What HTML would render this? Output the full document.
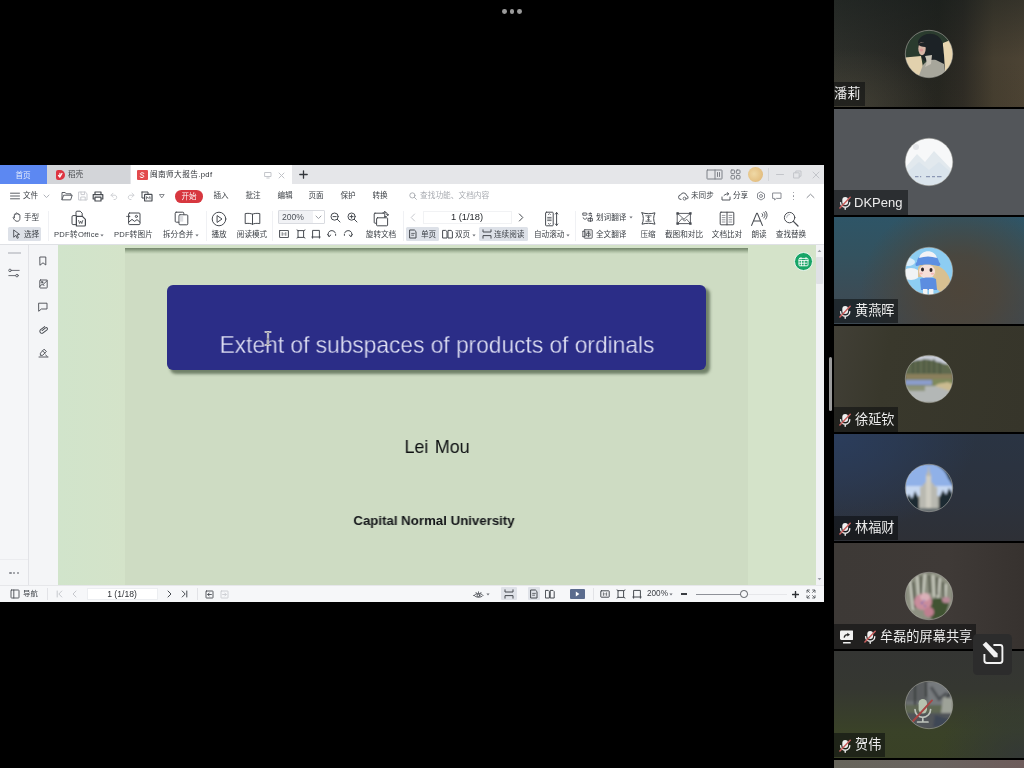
<!DOCTYPE html>
<html lang="zh"><head><meta charset="utf-8"><title>Meeting - shared screen</title>
<style>
html,body{margin:0;padding:0}
body{width:1024px;height:768px;background:#000;position:relative;overflow:hidden;font-family:"Liberation Sans","Noto Sans CJK SC",sans-serif}
.b{position:absolute;display:block}
.t{position:absolute;display:flex;align-items:center;white-space:nowrap;will-change:transform;font-family:"Liberation Sans","Noto Sans CJK SC",sans-serif}
.t svg{display:block;flex:none}
.ic{fill:none;stroke:#3b3f45;stroke-width:1;stroke-linecap:round;stroke-linejoin:round}
</style></head><body>
<svg width="0" height="0" style="position:absolute"><defs><filter id="soft" x="-10%" y="-10%" width="120%" height="120%"><feGaussianBlur stdDeviation="0.55"/></filter><filter id="soft1" x="-10%" y="-10%" width="120%" height="120%"><feGaussianBlur stdDeviation="0.8"/></filter><filter id="soft2" x="-10%" y="-10%" width="120%" height="120%"><feGaussianBlur stdDeviation="1.15"/></filter></defs></svg>
<div class="b" style="left:502.0px;top:9.3px;width:4.8px;height:4.8px;background:#9b9b9b;border-radius:50%"></div>
<div class="b" style="left:509.6px;top:9.3px;width:4.8px;height:4.8px;background:#9b9b9b;border-radius:50%"></div>
<div class="b" style="left:517.2px;top:9.3px;width:4.8px;height:4.8px;background:#9b9b9b;border-radius:50%"></div>
<div class="b" style="left:0px;top:164.7px;width:824.3px;height:437.8px;background:#ffffff;"></div>
<div class="b" style="left:0px;top:164.7px;width:824.3px;height:19px;background:#e5e6e9;"></div>
<div class="b" style="left:0px;top:164.7px;width:46.8px;height:19px;background:#5c88f2;"></div>
<div class="t" aria-label="首页" style="top:170.64px;height:9.12px;line-height:9.12px;font-size:7.6px;color:#e4ecfd;left:23.4px;transform:translateX(-50%);"><span>首页</span></div>
<div class="b" style="left:46.8px;top:164.7px;width:83.7px;height:19px;background:#d3d5d9;"></div>
<div class="b" style="left:55.8px;top:170.2px;width:9.3px;height:9.9px;background:#de3542;border-radius:2px 5px 5px 2px"></div>
<svg class="b ic" style="left:56.2px;top:171.0px;" width="8" height="8" viewBox="0 0 8 8"><path d="M2.4 4.4 3.8 6.2 6 2.4M3.9 6V2.2" style="stroke:#fff;stroke-width:1.1"/></svg>
<div class="t" aria-label="稻壳" style="top:170.44px;height:9.12px;line-height:9.12px;font-size:7.6px;color:#4a4d52;left:67.5px;"><span>稻壳</span></div>
<div class="b" style="left:130.5px;top:164.7px;width:161.5px;height:19.3px;background:#ffffff;"></div>
<div class="b" style="left:137px;top:170px;width:10.5px;height:10px;background:#e34a4d;border-radius:1px"></div>
<svg class="b ic" style="left:138.2px;top:171.0px;" width="8" height="8" viewBox="0 0 8 8"><path d="M2 5.8C2 7 5.8 7 5.8 5.2 5.8 3.6 2.4 4.4 2.4 2.8 2.4 1.4 6 1.4 6 2.6" style="stroke:#fff;stroke-width:1"/></svg>
<div class="t" aria-label="闽南师大报告.pdf" style="top:170.38px;height:9.24px;line-height:9.24px;font-size:7.699999999999999px;color:#2e3136;left:150px;letter-spacing:0.35px;"><span>闽南师大报告.pdf</span></div>
<svg class="b ic" style="left:264.0px;top:171.0px;stroke:#c4c6cb" width="8" height="8" viewBox="0 0 8 8"><rect x="1" y="1.5" width="6" height="4"/><path d="M2.8 7h2.4"/></svg>
<svg class="b ic" style="left:278.0px;top:171.5px;stroke:#c0c2c7" width="7" height="7" viewBox="0 0 7 7"><path d="M1 1l5 5M6 1l-5 5"/></svg>
<svg class="b ic" style="left:298.8px;top:170.0px;stroke:#33363b" width="9" height="9" viewBox="0 0 9 9"><path d="M4.5 0.8v7.4M0.8 4.5h7.4" style="stroke-width:1.3"/></svg>
<svg class="b ic" style="left:705.7px;top:168.5px;stroke:#7d8087" width="17" height="11" viewBox="0 0 17 11"><rect x="1" y="1" width="15" height="9" rx="0.5"/><path d="M9 1v9M11.5 3.5v4M13.5 3.5v4" /></svg>
<svg class="b ic" style="left:729.5px;top:168.5px;stroke:#7d8087" width="11" height="11" viewBox="0 0 11 11"><rect x="1" y="1" width="3.6" height="3.6" rx=".8"/><rect x="6.4" y="1" width="3.6" height="3.6" rx=".8"/><rect x="1" y="6.4" width="3.6" height="3.6" rx=".8"/><rect x="6.4" y="6.4" width="3.6" height="3.6" rx=".8"/></svg>
<div class="b" style="left:747.9px;top:166.9px;width:15px;height:15px;background:radial-gradient(circle at 40% 45%,#efd9a6 0,#e6c488 55%,#dcb274 100%);border-radius:50%"></div>
<div class="b" style="left:768px;top:168px;width:1px;height:13px;background:#d3d5d9;"></div>
<svg class="b ic" style="left:775.5px;top:173.0px;stroke:#c3c5ca" width="8" height="3" viewBox="0 0 8 3"><path d="M0.5 1.5h7"/></svg>
<svg class="b ic" style="left:792.8px;top:170.0px;stroke:#c3c5ca" width="9" height="9" viewBox="0 0 9 9"><rect x="1" y="2.8" width="5.2" height="5.2"/><path d="M2.8 2.8V1H8v5.2H6.2"/></svg>
<svg class="b ic" style="left:811.8px;top:170.5px;stroke:#c3c5ca" width="8" height="8" viewBox="0 0 8 8"><path d="M1 1l6 6M7 1l-6 6"/></svg>
<svg class="b ic" style="left:9.5px;top:192.0px;stroke:#4a4e55;stroke-width:.9" width="10" height="8" viewBox="0 0 10 8"><path d="M0.5 1.2h9M0.5 4h9M0.5 6.8h9"/></svg>
<div class="t" aria-label="文件" style="top:191.44px;height:9.12px;line-height:9.12px;font-size:7.6px;color:#3c4046;left:23px;"><span>文件</span></div>
<svg class="b ic" style="left:42.8px;top:193.8px;stroke:#b0b3b9" width="7" height="5" viewBox="0 0 7 5"><path d="M1 1l2.5 2.6L6 1"/></svg>
<svg class="b ic" style="left:60.5px;top:191.0px;stroke:#5a5e65" width="12" height="10" viewBox="0 0 12 10"><path d="M1 8.5V1.5h3.2l1 1.3H10v1.4M1 8.5l1.6-4.3H11.2L9.8 8.5z"/></svg>
<svg class="b ic" style="left:77.5px;top:191.0px;stroke:#c9cbd0" width="10" height="10" viewBox="0 0 10 10"><path d="M1 1h6.3L9 2.7V9H1zM3 1v2.6h3.6V1M2.8 9V6h4.4v3"/></svg>
<svg class="b ic" style="left:92.0px;top:190.5px;stroke:#474b51" width="12" height="11" viewBox="0 0 12 11"><path d="M3 3.4V1h6v2.4M3 8H1.2V3.6h9.6V8H9M3 6.2h6V10H3z" style="stroke-width:1.2"/></svg>
<svg class="b ic" style="left:109.5px;top:192.0px;stroke:#cfd1d5" width="9" height="8" viewBox="0 0 9 8"><path d="M1.2 3.2h4a2.3 2.3 0 0 1 0 4.3H4M3 1.2l-2 2 2 2"/></svg>
<svg class="b ic" style="left:125.5px;top:192.0px;stroke:#cfd1d5" width="9" height="8" viewBox="0 0 9 8"><path d="M7.8 3.2h-4a2.3 2.3 0 0 0 0 4.3H5M6 1.2l2 2-2 2"/></svg>
<svg class="b ic" style="left:140.5px;top:190.5px;stroke:#474b51" width="12" height="11" viewBox="0 0 12 11"><path d="M1 1h6v2.2M1 1v6h2.4" /><rect x="3.6" y="3.4" width="7.4" height="6.6" rx=".6" style="stroke-width:1.2"/><path d="M5.6 8V5.6l1.7 1.6L9 5.6V8" style="stroke-width:.8"/></svg>
<svg class="b ic" style="left:159.3px;top:193.0px;stroke:#6a6d74;stroke-width:.8" width="6" height="6" viewBox="0 0 6 6"><path d="M0.8 1.5h4.4L3 4.6z"/></svg>
<div class="b" style="left:175px;top:190px;width:28.3px;height:12.6px;background:#d7373f;border-radius:6.3px"></div>
<div class="t" aria-label="开始" style="top:191.64px;height:9.12px;line-height:9.12px;font-size:7.6px;color:#ffffff;left:189.2px;transform:translateX(-50%);opacity:0.95;"><span>开始</span></div>
<div class="t" aria-label="插入" style="top:191.44px;height:9.12px;line-height:9.12px;font-size:7.6px;color:#3c4046;left:221px;transform:translateX(-50%);"><span>插入</span></div>
<div class="t" aria-label="批注" style="top:191.44px;height:9.12px;line-height:9.12px;font-size:7.6px;color:#3c4046;left:253px;transform:translateX(-50%);"><span>批注</span></div>
<div class="t" aria-label="编辑" style="top:191.44px;height:9.12px;line-height:9.12px;font-size:7.6px;color:#3c4046;left:284.5px;transform:translateX(-50%);"><span>编辑</span></div>
<div class="t" aria-label="页面" style="top:191.44px;height:9.12px;line-height:9.12px;font-size:7.6px;color:#3c4046;left:316.3px;transform:translateX(-50%);"><span>页面</span></div>
<div class="t" aria-label="保护" style="top:191.44px;height:9.12px;line-height:9.12px;font-size:7.6px;color:#3c4046;left:348.2px;transform:translateX(-50%);"><span>保护</span></div>
<div class="t" aria-label="转换" style="top:191.44px;height:9.12px;line-height:9.12px;font-size:7.6px;color:#3c4046;left:379.6px;transform:translateX(-50%);"><span>转换</span></div>
<svg class="b ic" style="left:409.0px;top:192.0px;stroke:#a6a9af;stroke-width:.9" width="8" height="8" viewBox="0 0 8 8"><circle cx="3.4" cy="3.4" r="2.6"/><path d="M5.4 5.4 7.4 7.4"/></svg>
<div class="t" aria-label="查找功能、文档内容" style="top:191.38px;height:9.24px;line-height:9.24px;font-size:7.699999999999999px;color:#a9acb2;left:419.5px;"><span>查找功能、文档内容</span></div>
<svg class="b ic" style="left:677.5px;top:191.5px;stroke:#55595f" width="11" height="9" viewBox="0 0 11 9"><path d="M3 7.5a2.3 2.3 0 0 1-.3-4.6 3 3 0 0 1 5.8.6 2 2 0 0 1 .7 3.6"/><circle cx="6.6" cy="6.6" r="1.5" style="stroke-width:.8"/></svg>
<div class="t" aria-label="未同步" style="top:191.44px;height:9.12px;line-height:9.12px;font-size:7.6px;color:#3c4046;left:690.5px;"><span>未同步</span></div>
<svg class="b ic" style="left:720.5px;top:191.5px;stroke:#55595f" width="10" height="9" viewBox="0 0 10 9"><path d="M1 5v3h8V5M3 3.4C4.5 2 6 1.8 7.6 1.8M6.2 0.6 7.8 1.8 6.2 3.2"/></svg>
<div class="t" aria-label="分享" style="top:191.44px;height:9.12px;line-height:9.12px;font-size:7.6px;color:#3c4046;left:733.3px;"><span>分享</span></div>
<svg class="b ic" style="left:755.5px;top:191.0px;stroke:#8a8d94" width="10" height="10" viewBox="0 0 10 10"><path d="M5 1 8.5 3v4L5 9 1.5 7V3z"/><circle cx="5" cy="5" r="1.5"/></svg>
<svg class="b ic" style="left:772.0px;top:191.5px;stroke:#8a8d94" width="10" height="9" viewBox="0 0 10 9"><path d="M1 1h8v5.4H4.4L2.6 8V6.4H1z"/></svg>
<div class="b" style="left:793px;top:192px;width:1.4px;height:1.4px;background:#8a8d94;border-radius:50%"></div>
<div class="b" style="left:793px;top:195.3px;width:1.4px;height:1.4px;background:#8a8d94;border-radius:50%"></div>
<div class="b" style="left:793px;top:198.6px;width:1.4px;height:1.4px;background:#8a8d94;border-radius:50%"></div>
<svg class="b ic" style="left:806.0px;top:193.0px;stroke:#8a8d94" width="9" height="6" viewBox="0 0 9 6"><path d="M1 4.6 4.5 1.2 8 4.6"/></svg>
<svg class="b ic" style="left:11.5px;top:212.4px;stroke:#474b51;stroke-width:.9" width="9" height="10" viewBox="0 0 9 10"><path d="M2.4 5.4V2.6a.7.7 0 0 1 1.4 0V1.6a.7.7 0 0 1 1.4 0v.6a.7.7 0 0 1 1.4 0v.8a.7.7 0 0 1 1.3 0V6.4C7.9 8.3 6.8 9.3 5.2 9.3 3.4 9.3 2.6 8.2 1.2 5.8c-.4-.8.6-1.2 1.2-.4z"/></svg>
<div class="t" aria-label="手型" style="top:212.84px;height:9.12px;line-height:9.12px;font-size:7.6px;color:#3c4046;left:24.2px;"><span>手型</span></div>
<div class="b" style="left:8.3px;top:226.5px;width:33.2px;height:14.9px;background:#dde1e8;border-radius:1.5px"></div>
<svg class="b ic" style="left:11.5px;top:228.8px;stroke:#474b51;stroke-width:.9" width="9" height="10" viewBox="0 0 9 10"><path d="M2 1.2 7.6 5.4 5 5.8 6.4 8.8 5.2 9.3 3.9 6.3 2 8z"/></svg>
<div class="t" aria-label="选择" style="top:230.04px;height:9.12px;line-height:9.12px;font-size:7.6px;color:#3c4046;left:24.2px;"><span>选择</span></div>
<div class="b" style="left:47.5px;top:211px;width:1px;height:30px;background:#f0f1f4;"></div>
<svg class="b ic" style="left:70.0px;top:210.0px;stroke:#474b51" width="18" height="17" viewBox="0 0 18 17"><path d="M6 5.4V2.2a1 1 0 0 1 1-1h3.2l2 2v2.4"/><path d="M2 6.6a1 1 0 0 1 1-1h3.4v9H3a1 1 0 0 1-1-1z"/><path d="M6.4 6.4h6l3 3v5.6a1 1 0 0 1-1 1h-8z" style="stroke-width:1.2"/><path d="M8.6 10.4l1 3.2 1.1-2.6 1.1 2.6 1-3.2" style="stroke-width:.8"/></svg>
<div class="t" aria-label="PDF转Office" style="top:230.04px;height:9.12px;line-height:9.12px;font-size:7.6px;color:#3c4046;left:53.8px;letter-spacing:0.28px;"><span>PDF转Office</span></div>
<svg class="b ic" style="left:99.8px;top:233.6px;" width="4" height="3" viewBox="0 0 4 3"><path d="M0.4 0.6h3.2L2 2.6z" style="fill:#6b6e75;stroke:none"/></svg>
<svg class="b ic" style="left:125.5px;top:211.5px;stroke:#474b51" width="15" height="14" viewBox="0 0 15 14"><rect x="2.6" y="1" width="11.4" height="11.6" rx="1"/><path d="M2.6 10.2 6 7.4l2.6 2 2.4-1.8 3 2.6"/><circle cx="10.4" cy="4.4" r="1.1"/><path d="M0.6 4.4h3.2M2.6 3.2 3.8 4.4 2.6 5.6" style="stroke-width:.8"/></svg>
<div class="t" aria-label="PDF转图片" style="top:230.04px;height:9.12px;line-height:9.12px;font-size:7.6px;color:#3c4046;left:113.8px;letter-spacing:0.2px;"><span>PDF转图片</span></div>
<svg class="b ic" style="left:173.5px;top:211.0px;stroke:#474b51" width="15" height="15" viewBox="0 0 15 15"><rect x="1.2" y="1.2" width="8.6" height="10" rx="1"/><rect x="5" y="3.8" width="8.8" height="10" rx="1" style="fill:#fff"/><rect x="5.6" y="4.4" width="3.6" height="6.2" style="fill:#dddee2;stroke:none"/></svg>
<div class="t" aria-label="拆分合并" style="top:230.04px;height:9.12px;line-height:9.12px;font-size:7.6px;color:#3c4046;left:163px;"><span>拆分合并</span></div>
<svg class="b ic" style="left:195.3px;top:233.6px;" width="4" height="3" viewBox="0 0 4 3"><path d="M0.4 0.6h3.2L2 2.6z" style="fill:#6b6e75;stroke:none"/></svg>
<div class="b" style="left:205.5px;top:211px;width:1px;height:30px;background:#f0f1f4;"></div>
<svg class="b ic" style="left:211.0px;top:210.5px;stroke:#474b51" width="16" height="16" viewBox="0 0 16 16"><circle cx="8" cy="8" r="6.8"/><path d="M6.4 4.8 11 8 6.4 11.2z"/></svg>
<div class="t" aria-label="播放" style="top:230.04px;height:9.12px;line-height:9.12px;font-size:7.6px;color:#3c4046;left:219.3px;transform:translateX(-50%);"><span>播放</span></div>
<svg class="b ic" style="left:243.5px;top:211.5px;stroke:#474b51" width="17" height="14" viewBox="0 0 17 14"><path d="M8.5 2.2V12M8.5 2.2C7 1.2 3.5 1.2 1.2 1.6v10c2.3-.4 5.8-.4 7.3.6M8.5 2.2C10 1.2 13.5 1.2 15.8 1.6v10c-2.3-.4-5.8-.4-7.3.6"/></svg>
<div class="t" aria-label="阅读模式" style="top:230.04px;height:9.12px;line-height:9.12px;font-size:7.6px;color:#3c4046;left:252.3px;transform:translateX(-50%);"><span>阅读模式</span></div>
<div class="b" style="left:271.5px;top:211px;width:1px;height:30px;background:#f0f1f4;"></div>
<div class="b" style="left:277.5px;top:209.8px;width:47px;height:13.9px;background:#ffffff;border:1px solid #d9dbe0;box-sizing:border-box;border-radius:1px"></div>
<div class="b" style="left:278.5px;top:210.8px;width:34px;height:11.9px;background:#f1f2f5;"></div>
<div class="t" aria-label="200%" style="top:212.04px;height:10.32px;line-height:10.32px;font-size:8.6px;color:#4d5259;left:281.6px;"><span>200%</span></div>
<svg class="b ic" style="left:315.0px;top:214.5px;stroke:#9da0a6" width="7" height="5" viewBox="0 0 7 5"><path d="M1 1l2.5 2.6L6 1"/></svg>
<svg class="b ic" style="left:330.3px;top:212.0px;stroke:#474b51" width="11" height="11" viewBox="0 0 11 11"><circle cx="4.6" cy="4.6" r="3.6"/><path d="M7.3 7.3 10 10M3 4.6h3.2"/></svg>
<svg class="b ic" style="left:346.8px;top:212.0px;stroke:#474b51" width="11" height="11" viewBox="0 0 11 11"><circle cx="4.6" cy="4.6" r="3.6"/><path d="M7.3 7.3 10 10M3 4.6h3.2M4.6 3v3.2"/></svg>
<svg class="b ic" style="left:279.0px;top:229.8px;stroke:#474b51" width="10" height="8" viewBox="0 0 10 8"><rect x="0.6" y="0.4" width="8.8" height="7.2" rx=".3"/><path d="M3.2 2.6v2.8M6.8 2.6v2.8M5 3.3v.1M5 4.8v.1" style="stroke-width:.8"/></svg>
<svg class="b ic" style="left:295.5px;top:228.8px;stroke:#474b51" width="10" height="10" viewBox="0 0 10 10"><rect x="2.4" y="1.6" width="5.2" height="6.8"/><path d="M1 1l1.4.8M9 1 7.6 1.8M1 9l1.4-.8M9 9 7.6 8.2" /></svg>
<svg class="b ic" style="left:311.0px;top:228.8px;stroke:#474b51" width="10" height="10" viewBox="0 0 10 10"><path d="M1.6 8V1.4h6.8V8M0.8 8h8.4M1.6 8v1.2M8.4 8v1.2"/></svg>
<svg class="b ic" style="left:327.3px;top:229.3px;stroke:#474b51" width="10" height="9" viewBox="0 0 10 9"><path d="M2 7.6A3.6 3.6 0 0 1 5 1.6a3.6 3.6 0 0 1 3.4 2.4" style="stroke-dasharray:none"/><path d="M0.6 5.4 2 7.6 3.8 6" /><path d="M8.6 5.4v2" style="stroke-dasharray:1 1"/></svg>
<svg class="b ic" style="left:343.0px;top:229.3px;stroke:#474b51" width="10" height="9" viewBox="0 0 10 9"><path d="M8 7.6A3.6 3.6 0 0 0 5 1.6a3.6 3.6 0 0 0-3.4 2.4"/><path d="M9.4 5.4 8 7.6 6.2 6"/><path d="M1.4 5.4v2" style="stroke-dasharray:1 1"/></svg>
<svg class="b ic" style="left:372.6px;top:211.0px;stroke:#474b51" width="16" height="16" viewBox="0 0 16 16"><rect x="1.2" y="2.2" width="10.6" height="10" rx=".8"/><rect x="3.6" y="6.8" width="11" height="8" rx=".8" style="fill:#fff"/><path d="M10.2 2.2V1.4M11.8 5.6h1.6" /><path d="M11.4 0.8a3.6 3.6 0 0 1 3.4 3.6M13.6 3.4l1.2 1.2 1-1.3M12.3 1.8 11.2.8l1.2-.7" style="stroke-width:.9"/></svg>
<div class="t" aria-label="旋转文档" style="top:230.04px;height:9.12px;line-height:9.12px;font-size:7.6px;color:#3c4046;left:380.5px;transform:translateX(-50%);"><span>旋转文档</span></div>
<div class="b" style="left:402.5px;top:211px;width:1px;height:30px;background:#f0f1f4;"></div>
<svg class="b ic" style="left:410.3px;top:213.0px;stroke:#c7c9ce" width="6" height="9" viewBox="0 0 6 9"><path d="M4.6 1 1.2 4.5 4.6 8"/></svg>
<div class="b" style="left:423px;top:210.6px;width:89px;height:13.4px;background:#ffffff;border:1px solid #f1f2f4;box-sizing:border-box"></div>
<div class="t" aria-label="1 (1/18)" style="top:211.72px;height:11.16px;line-height:11.16px;font-size:9.3px;color:#1f2226;left:467px;transform:translateX(-50%);"><span>1&nbsp;(1/18)</span></div>
<svg class="b ic" style="left:518.0px;top:213.0px;stroke:#474b51" width="6" height="9" viewBox="0 0 6 9"><path d="M1.4 1 4.8 4.5 1.4 8"/></svg>
<div class="b" style="left:406px;top:226.5px;width:33.2px;height:14.9px;background:#dde1e8;border-radius:1.5px"></div>
<svg class="b ic" style="left:409.0px;top:228.8px;stroke:#474b51" width="8" height="10" viewBox="0 0 8 10"><path d="M1 1h4.4L7 2.6V9H1z"/><path d="M2.6 4.4h2.8M2.6 6.2h2" style="stroke-width:.8"/></svg>
<div class="t" aria-label="单页" style="top:230.04px;height:9.12px;line-height:9.12px;font-size:7.6px;color:#3c4046;left:421px;"><span>单页</span></div>
<svg class="b ic" style="left:441.5px;top:228.8px;stroke:#474b51" width="11" height="10" viewBox="0 0 11 10"><path d="M1 1.4h2.6L5 2.6V9H1zM6.4 1.4H9l1.4 1.2V9h-4z"/></svg>
<div class="t" aria-label="双页" style="top:230.04px;height:9.12px;line-height:9.12px;font-size:7.6px;color:#3c4046;left:455.2px;"><span>双页</span></div>
<svg class="b ic" style="left:472.4px;top:233.6px;" width="4" height="3" viewBox="0 0 4 3"><path d="M0.4 0.6h3.2L2 2.6z" style="fill:#6b6e75;stroke:none"/></svg>
<div class="b" style="left:479px;top:226.5px;width:48.6px;height:14.9px;background:#dde1e8;border-radius:1.5px"></div>
<svg class="b ic" style="left:481.5px;top:228.8px;stroke:#474b51" width="10" height="10" viewBox="0 0 10 10"><path d="M1 0.8V3h8V0.8M1 9.2V6.6h8v2.6"/></svg>
<div class="t" aria-label="连续阅读" style="top:230.04px;height:9.12px;line-height:9.12px;font-size:7.6px;color:#3c4046;left:494.3px;"><span>连续阅读</span></div>
<svg class="b ic" style="left:544.0px;top:210.5px;stroke:#474b51" width="15" height="16" viewBox="0 0 15 16"><rect x="1.6" y="1.2" width="7.6" height="13.6" rx=".8"/><path d="M3.6 6.4h3.6M3.6 8h3.6M3.6 9.6h3.6M4.4 3.6l1-1 1 1M4.4 12.4l1 1 1-1" style="stroke-width:.8"/><path d="M12.6 1.6v12.8M11.4 3l1.2-1.4L13.8 3M11.4 13l1.2 1.4 1.2-1.4"/></svg>
<div class="t" aria-label="自动滚动" style="top:230.04px;height:9.12px;line-height:9.12px;font-size:7.6px;color:#3c4046;left:534.3px;"><span>自动滚动</span></div>
<svg class="b ic" style="left:565.6px;top:233.6px;" width="4" height="3" viewBox="0 0 4 3"><path d="M0.4 0.6h3.2L2 2.6z" style="fill:#6b6e75;stroke:none"/></svg>
<div class="b" style="left:575px;top:211px;width:1px;height:30px;background:#f0f1f4;"></div>
<svg class="b ic" style="left:582.1px;top:212.3px;stroke:#474b51;stroke-width:.9" width="11" height="10" viewBox="0 0 11 10"><path d="M1.2 1h2.8a1 1 0 0 1 1 1v.2a1 1 0 0 1-1 1H1.2zM1.2 5.8c0 2 3.6 2 3.6 0M7 1.6h2.6M8.3 0.8v.8M7 3.2h2.6v1.6M6.4 6.4h4v2.6h-4zM8.4 5.4v4.2"/></svg>
<div class="t" aria-label="划词翻译" style="top:212.74px;height:9.12px;line-height:9.12px;font-size:7.6px;color:#3c4046;left:596px;"><span>划词翻译</span></div>
<svg class="b ic" style="left:629.4px;top:216.3px;" width="4" height="3" viewBox="0 0 4 3"><path d="M0.4 0.6h3.2L2 2.6z" style="fill:#6b6e75;stroke:none"/></svg>
<svg class="b ic" style="left:582.1px;top:228.8px;stroke:#474b51;stroke-width:.9" width="11" height="10" viewBox="0 0 11 10"><rect x="2.2" y="0.8" width="8" height="8.4" rx=".6"/><path d="M0.6 2.4h2.6v5.2H.6zM4.8 3h3.4M4.8 4.6h3.4v2.2H4.8zM6.5 2.2v5.6" style="stroke-width:.8"/></svg>
<div class="t" aria-label="全文翻译" style="top:230.04px;height:9.12px;line-height:9.12px;font-size:7.6px;color:#3c4046;left:596px;"><span>全文翻译</span></div>
<svg class="b ic" style="left:639.7px;top:211.0px;stroke:#474b51" width="17" height="15" viewBox="0 0 17 15"><path d="M2 1.8c4 1.2 9 1.2 13 0-1.8 3.8-1.8 7.6 0 11.4-4-1.2-9-1.2-13 0 1.8-3.8 1.8-7.6 0-11.4z"/><path d="M5.8 4.8h5.4M5.8 10.2h5.4M8.5 5.2v1.6M8.5 9.8V8.2M7.4 6.2l1.1 1 1.1-1M7.4 8.8l1.1-1 1.1 1" style="stroke-width:.8"/></svg>
<div class="t" aria-label="压缩" style="top:230.04px;height:9.12px;line-height:9.12px;font-size:7.6px;color:#3c4046;left:648px;transform:translateX(-50%);"><span>压缩</span></div>
<svg class="b ic" style="left:674.8px;top:211.0px;stroke:#474b51;stroke-width:.9" width="18" height="15" viewBox="0 0 18 15"><rect x="2.6" y="2.4" width="12.8" height="10.2"/><path d="M2.6 12.6 7 7.6l2.6 2.6 2-2 3.8 4.4M2.6 2.4l6.4 5.8M15.4 2.4 9 8.2" style="stroke-width:.8"/><rect x="1.4" y="1.2" width="2.4" height="2.4" style="fill:#474b51;stroke:none"/><rect x="14.2" y="1.2" width="2.4" height="2.4" style="fill:#474b51;stroke:none"/><rect x="1.4" y="11.4" width="2.4" height="2.4" style="fill:#474b51;stroke:none"/><rect x="14.2" y="11.4" width="2.4" height="2.4" style="fill:#474b51;stroke:none"/></svg>
<div class="t" aria-label="截图和对比" style="top:230.04px;height:9.12px;line-height:9.12px;font-size:7.6px;color:#3c4046;left:683.7px;transform:translateX(-50%);"><span>截图和对比</span></div>
<svg class="b ic" style="left:718.7px;top:211.0px;stroke:#4a4d53" width="16" height="15" viewBox="0 0 16 15"><rect x="1.2" y="1.2" width="13.6" height="12.6" rx=".8"/><path d="M8 1.2v12.6"/><path d="M3.2 4.4h2.8M3.2 6.6h2.8M3.2 8.8h2.8M3.2 11h2.8M10 4.4h2.8M10 6.6h2.8M10 8.8h2.8M10 11h2.8" style="stroke-width:.8;stroke:#7b7e85"/></svg>
<div class="t" aria-label="文档比对" style="top:230.04px;height:9.12px;line-height:9.12px;font-size:7.6px;color:#3c4046;left:727.4px;transform:translateX(-50%);"><span>文档比对</span></div>
<svg class="b ic" style="left:750.2px;top:210.5px;stroke:#474b51" width="18" height="16" viewBox="0 0 18 16"><path d="M1.6 14.4 6.6 2.4h.8l5 12M3.6 10h6.8" style="stroke-width:1.1"/><path d="M12.2 5.6a2 2 0 0 0 0-3M13.8 7a4.2 4.2 0 0 0 0-5.8M15.6 8.2a6.4 6.4 0 0 0 0-8" style="stroke-width:.9"/></svg>
<div class="t" aria-label="朗读" style="top:230.04px;height:9.12px;line-height:9.12px;font-size:7.6px;color:#3c4046;left:759.2px;transform:translateX(-50%);"><span>朗读</span></div>
<svg class="b ic" style="left:782.6px;top:210.8px;stroke:#4a4d53" width="16" height="16" viewBox="0 0 16 16"><circle cx="6.6" cy="6.6" r="5.2"/><path d="M10.4 10.4 15 15" style="stroke-width:1.3"/><path d="M3.6 6.4a3 3 0 0 1 3-3" style="stroke:#9b9ea5;stroke-width:.8"/></svg>
<div class="t" aria-label="查找替换" style="top:230.04px;height:9.12px;line-height:9.12px;font-size:7.6px;color:#3c4046;left:791.2px;transform:translateX(-50%);"><span>查找替换</span></div>
<div class="b" style="left:0px;top:244.2px;width:824.3px;height:1.2px;background:#dfe1e5;"></div>
<div class="b" style="left:0px;top:245.4px;width:28px;height:339.30000000000007px;background:#f5f6f8;"></div>
<div class="b" style="left:28px;top:245.4px;width:1px;height:339.30000000000007px;background:#e2e3e7;"></div>
<div class="b" style="left:29px;top:245.4px;width:28.5px;height:339.30000000000007px;background:#f4f5f7;"></div>
<div class="b" style="left:57.5px;top:245.4px;width:758.2px;height:339.30000000000007px;background:linear-gradient(90deg,#d1e4cb 0,#d4e3c9 9%,#d4e3c9 100%);"></div>
<div class="b" style="left:125.2px;top:248.4px;width:622.8px;height:336.30000000000007px;background:#cedcc3;"></div>
<div class="b" style="left:125.2px;top:248.4px;width:622.8px;height:6px;background:linear-gradient(#74866c 0,#8c9e83 30%,#b2c3a8 65%,rgba(206,220,195,0) 100%);"></div>
<div class="b" style="left:166.6px;top:284.7px;width:539.2px;height:85.7px;background:#2b2d87;border-radius:6px;box-shadow:3.5px 3.5px 3px rgba(55,72,50,.62)"></div>
<div class="b" style="left:137.35000000000002px;top:330.0px;width:600px;height:30px;line-height:30px;text-align:center;color:#dfe0f3;font-size:24.5px;white-space:nowrap;will-change:transform;transform:scaleX(0.928);-webkit-text-stroke:0.3px #2b2d87">Extent of subspaces of products of ordinals</div>
<div class="b" style="left:136.60000000000002px;top:435.1px;width:600px;height:24px;line-height:24px;text-align:center;color:#0e1012;font-size:18.6px;white-space:nowrap;will-change:transform;transform:scaleX(0.962);word-spacing:1.5px">Lei Mou</div>
<div class="b" style="left:133.75px;top:511.4px;width:600px;height:20px;line-height:20px;text-align:center;color:#141619;font-size:13.4px;white-space:nowrap;will-change:transform;transform:scaleX(0.99);font-weight:bold">Capital Normal University</div>
<svg class="b ic" style="left:263.5px;top:331.3px;" width="8" height="15" viewBox="0 0 8 15"><path d="M1.6 1h1.6L4 1.8l.8-.8h1.6M4 1.8v11.4M1.6 14h1.6l.8-.8.8.8h1.6" style="stroke:#e4e4ee;stroke-width:2.2"/><path d="M1.6 1h1.6L4 1.8l.8-.8h1.6M4 1.8v11.4M1.6 14h1.6l.8-.8.8.8h1.6M3 8h2" style="stroke:#6c6c78;stroke-width:.8"/></svg>
<div class="b" style="left:8.4px;top:252.3px;width:12.8px;height:1.8px;background:#cdcfd4;"></div>
<svg class="b ic" style="left:8.4px;top:268.4px;stroke:#5c6067;stroke-width:.9" width="12" height="10" viewBox="0 0 12 10"><path d="M3.4 2.4h7.8M0.8 7.6h6.8"/><circle cx="2" cy="2.4" r="1.3"/><circle cx="9" cy="7.6" r="1.3"/></svg>
<div class="b" style="left:9.3px;top:571.6px;width:2.4px;height:2.4px;background:#8b8e95;border-radius:50%"></div>
<div class="b" style="left:13.1px;top:571.6px;width:2.4px;height:2.4px;background:#8b8e95;border-radius:50%"></div>
<div class="b" style="left:16.9px;top:571.6px;width:2.4px;height:2.4px;background:#8b8e95;border-radius:50%"></div>
<div class="b" style="left:0px;top:559px;width:28px;height:1px;background:#ebecef;"></div>
<svg class="b ic" style="left:39.0px;top:256.0px;stroke:#474b51;stroke-width:.9" width="8" height="10" viewBox="0 0 8 10"><path d="M1.2 1h5.6v8L4 6.8 1.2 9z"/></svg>
<svg class="b ic" style="left:38.5px;top:279.0px;stroke:#474b51;stroke-width:.9" width="9" height="10" viewBox="0 0 9 10"><rect x="0.8" y="1" width="7.4" height="8" rx=".6"/><path d="M0.8 7.4 3.4 5l1.6 1.6M8.2 1.6 4 5.6"/><circle cx="3" cy="3.2" r=".8"/></svg>
<svg class="b ic" style="left:38.0px;top:302.0px;stroke:#474b51;stroke-width:.9" width="10" height="10" viewBox="0 0 10 10"><path d="M1 1.2h8V7H3.4L1 9z"/></svg>
<svg class="b ic" style="left:37.7px;top:325.4px;stroke:#474b51;stroke-width:.95" width="11" height="10" viewBox="0 0 11 10"><g transform="rotate(-38 5.5 5)"><path d="M8.6 3H3.4a2 2 0 0 0 0 4h5a1.2 1.2 0 0 0 0-2.4H4"/></g></svg>
<svg class="b ic" style="left:37.5px;top:348.0px;stroke:#474b51;stroke-width:.9" width="11" height="10" viewBox="0 0 11 10"><path d="M1 9h9M2.4 7V5.2L6 1.2l2.4 2.2L5 7zM4.6 2.8l2.2 2.2M7.6 7l1.6 1.4"/></svg>
<div class="b" style="left:815.6px;top:245.4px;width:8.7px;height:339.30000000000007px;background:#f1f2f4;"></div>
<div class="b" style="left:816.2px;top:257px;width:6.6px;height:27px;background:#dfe1e5;border-radius:1px"></div>
<svg class="b ic" style="left:817.0px;top:248.5px;" width="5" height="4" viewBox="0 0 5 4"><path d="M0.6 3 2.5.8 4.4 3z" style="fill:#9a9da3;stroke:none"/></svg>
<svg class="b ic" style="left:817.0px;top:576.5px;" width="5" height="4" viewBox="0 0 5 4"><path d="M0.6 1 2.5 3.2 4.4 1z" style="fill:#9a9da3;stroke:none"/></svg>
<div class="b" style="left:794px;top:252.2px;width:19px;height:19px;background:#17a567;border-radius:50%;border:1px solid #e9f5ee;box-sizing:border-box"></div>
<svg class="b ic" style="left:798.0px;top:256.8px;stroke:#fff;stroke-width:.9" width="11" height="10" viewBox="0 0 11 10"><rect x="1" y="1.4" width="9" height="7.4" rx=".8"/><path d="M1 3.6h9M3.4 3.6v5M6.2 3.6v5M1 6.2h7.6M3 0.6v1.6M8 0.6v1.6"/></svg>
<div class="b" style="left:0px;top:584.7px;width:824.3px;height:17.799999999999955px;background:#f6f7f9;"></div>
<div class="b" style="left:0px;top:584.7px;width:824px;height:1px;background:#e6e7ea;"></div>
<svg class="b ic" style="left:9.5px;top:589.0px;stroke:#474b51;stroke-width:.9" width="10" height="10" viewBox="0 0 10 10"><rect x="1" y="1" width="8" height="8" rx=".6"/><path d="M3.8 1v8"/></svg>
<div class="t" aria-label="导航" style="top:589.56px;height:8.88px;line-height:8.88px;font-size:7.3999999999999995px;color:#3c4046;left:22.8px;"><span>导航</span></div>
<div class="b" style="left:47px;top:588px;width:1px;height:12px;background:#e2e3e7;"></div>
<svg class="b ic" style="left:55.5px;top:590.0px;stroke:#c6c8cd" width="7" height="8" viewBox="0 0 7 8"><path d="M1.2 1v6M5.8 1 2.8 4l3 3"/></svg>
<svg class="b ic" style="left:71.5px;top:590.0px;stroke:#c6c8cd" width="5" height="8" viewBox="0 0 5 8"><path d="M4 1 1 4l3 3"/></svg>
<div class="b" style="left:86.5px;top:588px;width:71px;height:12px;background:#ffffff;border:1px solid #eceef1;box-sizing:border-box"></div>
<div class="t" aria-label="1 (1/18)" style="top:588.84px;height:10.32px;line-height:10.32px;font-size:8.6px;color:#2e3136;left:122px;transform:translateX(-50%);"><span>1&nbsp;(1/18)</span></div>
<svg class="b ic" style="left:166.9px;top:590.0px;stroke:#474b51" width="5" height="8" viewBox="0 0 5 8"><path d="M1 1l3 3-3 3"/></svg>
<svg class="b ic" style="left:181.1px;top:590.0px;stroke:#474b51" width="7" height="8" viewBox="0 0 7 8"><path d="M5.8 1v6M1.2 1l3 3-3 3"/></svg>
<div class="b" style="left:197px;top:588px;width:1px;height:12px;background:#e2e3e7;"></div>
<svg class="b ic" style="left:204.5px;top:589.5px;stroke:#474b51;stroke-width:.9" width="9" height="9" viewBox="0 0 9 9"><rect x="1" y="1" width="7" height="7" rx=".5"/><path d="M6.4 4.5H2.8M4.2 3 2.8 4.5 4.2 6"/></svg>
<svg class="b ic" style="left:220.3px;top:589.5px;stroke:#c9cbd0;stroke-width:.9" width="9" height="9" viewBox="0 0 9 9"><rect x="1" y="1" width="7" height="7" rx=".5"/><path d="M2.6 4.5h3.6M4.8 3l1.4 1.5L4.8 6"/></svg>
<svg class="b ic" style="left:473.1px;top:589.8px;stroke:#474b51;stroke-width:.9" width="11" height="9" viewBox="0 0 11 9"><path d="M1 5.4C2.6 3 8.4 3 10 5.4 8.4 7.8 2.6 7.8 1 5.4z"/><circle cx="5.5" cy="5.4" r="1.3"/><path d="M3 2.4l.6 1M5.5 1.8v1.2M8 2.4l-.6 1" style="stroke-width:.8"/></svg>
<svg class="b ic" style="left:486.2px;top:593.1px;" width="4" height="3" viewBox="0 0 4 3"><path d="M0.4 0.6h3.2L2 2.6z" style="fill:#6b6e75;stroke:none"/></svg>
<div class="b" style="left:501.3px;top:587.3px;width:15.6px;height:13.2px;background:#dfe2e8;border-radius:1px"></div>
<svg class="b ic" style="left:504.0px;top:589.0px;stroke:#474b51" width="10" height="10" viewBox="0 0 10 10"><path d="M1 0.8V3h8V0.8M1 9.2V6.6h8v2.6"/></svg>
<div class="b" style="left:527.6px;top:587.3px;width:12.8px;height:13.2px;background:#dfe2e8;border-radius:1px"></div>
<svg class="b ic" style="left:530.0px;top:589.0px;stroke:#474b51" width="8" height="10" viewBox="0 0 8 10"><path d="M1 1h4.4L7 2.6V9H1z"/><path d="M2.6 4.4h2.8M2.6 6.2h2" style="stroke-width:.8"/></svg>
<svg class="b ic" style="left:544.5px;top:589.0px;stroke:#474b51" width="10" height="10" viewBox="0 0 10 10"><path d="M0.8 1.4h2.4L4.4 2.6V9H.8zM5.6 1.4H8l1.2 1.2V9H5.6z"/></svg>
<div class="b" style="left:570px;top:588.5px;width:15.4px;height:10.8px;background:#5b6c8e;border-radius:1px"></div>
<svg class="b ic" style="left:575.4px;top:591.0px;" width="5" height="6" viewBox="0 0 5 6"><path d="M0.8.6 4.4 3 .8 5.4z" style="fill:#fff;stroke:none"/></svg>
<div class="b" style="left:593px;top:588px;width:1px;height:12px;background:#e2e3e7;"></div>
<svg class="b ic" style="left:599.5px;top:590.0px;stroke:#474b51" width="10" height="8" viewBox="0 0 10 8"><rect x="0.8" y="0.8" width="8.4" height="6.4" rx=".5"/><path d="M3.4 2.8v2.6M6.6 2.8v2.6M5 3.4v.1M5 4.8v.1" style="stroke-width:.8"/></svg>
<svg class="b ic" style="left:615.7px;top:589.0px;stroke:#474b51" width="10" height="10" viewBox="0 0 10 10"><rect x="2.4" y="1.6" width="5.2" height="6.8"/><path d="M1 1l1.4.8M9 1 7.6 1.8M1 9l1.4-.8M9 9 7.6 8.2"/></svg>
<svg class="b ic" style="left:632.0px;top:589.0px;stroke:#474b51" width="10" height="10" viewBox="0 0 10 10"><path d="M1.6 8V1.4h6.8V8M0.8 8h8.4M1.6 8v1.2M8.4 8v1.2"/></svg>
<div class="t" aria-label="200%" style="top:589.08px;height:9.84px;line-height:9.84px;font-size:8.2px;color:#3a3d43;left:646.5px;"><span>200%</span></div>
<svg class="b ic" style="left:669.3px;top:593.1px;" width="4" height="3" viewBox="0 0 4 3"><path d="M0.4 0.6h3.2L2 2.6z" style="fill:#6b6e75;stroke:none"/></svg>
<div class="b" style="left:680.8px;top:593.3px;width:6.4px;height:1.5px;background:#3a3d43;"></div>
<div class="b" style="left:695.5px;top:593.6px;width:45px;height:1px;background:#8e9198;"></div>
<div class="b" style="left:747px;top:593.6px;width:40px;height:1px;background:#e6e7ea;"></div>
<div class="b" style="left:740.4px;top:590.2px;width:7.6px;height:7.6px;background:#f6f7f9;border-radius:50%;border:1px solid #5a5d63;box-sizing:border-box"></div>
<svg class="b ic" style="left:791.5px;top:590.5px;stroke:#2e3136" width="7" height="7" viewBox="0 0 7 7"><path d="M3.5 0.6v5.8M0.6 3.5h5.8" style="stroke-width:1.4"/></svg>
<svg class="b ic" style="left:805.5px;top:589.0px;stroke:#474b51" width="10" height="10" viewBox="0 0 10 10"><path d="M1 3.4V1h2.4M6.6 1H9v2.4M9 6.6V9H6.6M3.4 9H1V6.6M1.4 1.4l2 2M8.6 1.4l-2 2M8.6 8.6l-2-2M1.4 8.6l2-2" style="stroke-width:.8"/></svg>
<div class="b" style="left:834px;top:0.0px;width:190px;height:106.5px;background:radial-gradient(ellipse 45% 55% at 8% 100%,rgba(80,76,62,.55),rgba(80,76,62,0) 100%),linear-gradient(180deg,rgba(18,26,26,.38) 0,rgba(0,0,0,0) 55%,rgba(70,58,38,.12) 100%),linear-gradient(90deg,#2e302b 0,#282925 30%,#23241f 55%,#2c2a24 68%,#453e30 84%,#4c4334 100%);overflow:hidden"></div>
<svg class="b" style="left:904.1px;top:28.6px" width="50" height="50" viewBox="-1 -1 50 50"><defs><clipPath id="cp0"><circle cx="24" cy="24" r="23.6"/></clipPath></defs><g clip-path="url(#cp0)"><g filter="url(#soft)"><rect width="48" height="48" fill="#2c3b2e"/><path d="M0 27.5 16 26l4 22H0z" fill="#e2d1ad"/><path d="M38 13 48 9v32l-9 5-3-16z" fill="#e7d5af"/><path d="M13 12c2-8 14-11 21-5 5 5 4 12 5 18l1 16-12 3-4-14c-2 2-6 1-7-2z" fill="#1d2226"/><ellipse cx="17" cy="18.6" rx="3.7" ry="6.6" fill="#d6b5a6"/><ellipse cx="16.4" cy="20" rx="1.8" ry="1.6" fill="#d99a98"/><path d="M13.5 15c2-4 7-4 9 2-3 0-6 0-9-2z" fill="#1d2226"/><path d="M18 35c3-4 8-6 13-5l8 4 2 14H13z" fill="#a7a69b"/><path d="M20 26c2 4 2 8 0 11l6-3 1-9z" fill="#c9c4b8"/></g></g><circle cx="24" cy="24" r="23.7" fill="none" stroke="rgba(205,205,195,.6)" stroke-width=".8"/></svg>
<div class="b" style="left:834px;top:81.9px;width:30.5px;height:24.6px;background:rgba(8,10,12,.52);"></div>
<div class="t" aria-label="潘莉" style="top:86.48px;height:15.84px;line-height:15.84px;font-size:13.2px;color:#ececec;left:834.4px;"><span>潘莉</span></div>
<div class="b" style="left:834px;top:108.5px;width:190px;height:106.5px;background:#53565a;overflow:hidden"></div>
<svg class="b" style="left:904.1px;top:137.1px" width="50" height="50" viewBox="-1 -1 50 50"><defs><clipPath id="cp1"><circle cx="24" cy="24" r="23.6"/></clipPath></defs><g clip-path="url(#cp1)"><g filter="url(#soft)"><rect width="48" height="48" fill="#f7f8f9"/><circle cx="11" cy="9" r="3" fill="#e4e6e9"/><path d="M0 30 12 16l8 8 9-11 19 20v15H0z" fill="#e2e9ee"/><path d="M0 36 14 24l10 8 10-8 14 12v12H0z" fill="#dae4ec"/><path d="M10 38.6h3.5M15 38.6h1.2M21 38.6h4M27 38.6h3M32 38.6h4.5" stroke="#8c98b4" stroke-width="1.4"/></g></g><circle cx="24" cy="24" r="23.7" fill="none" stroke="rgba(205,205,195,.6)" stroke-width=".8"/></svg>
<div class="b" style="left:834px;top:190.4px;width:74.4px;height:24.6px;background:rgba(8,10,12,.52);"></div>
<svg class="b" style="left:839.1px;top:196.0px" width="12" height="14" viewBox="0 0 12 14"><rect x="3.3" y="0.9" width="5.8" height="8" rx="2.9" fill="#f0f0f0"/><path d="M1.6 6.6a4.6 4.6 0 0 0 9.2 0M6.2 11.2v2" fill="none" stroke="#f0f0f0" stroke-width="1.4" stroke-linecap="round"/><path d="M11.2 1.2 0.9 12" stroke="#c9605f" stroke-width="1.5" stroke-linecap="round"/></svg>
<div class="t" aria-label="DKPeng" style="top:195.2px;height:15.6px;line-height:15.6px;font-size:13px;color:#ececec;fill:#ececec;left:854.4px;"><span>DKPeng</span></div>
<div class="b" style="left:834px;top:217.0px;width:190px;height:106.5px;background:radial-gradient(ellipse 52% 85% at 66% 68%,#4d453a 0,rgba(77,69,58,.85) 38%,rgba(77,69,58,0) 100%),linear-gradient(180deg,#2e5567 0,#33525f 35%,#3b4c56 70%,#3c4852 100%);overflow:hidden"></div>
<svg class="b" style="left:904.1px;top:245.6px" width="50" height="50" viewBox="-1 -1 50 50"><defs><clipPath id="cp2"><circle cx="24" cy="24" r="23.6"/></clipPath></defs><g clip-path="url(#cp2)"><g filter="url(#soft)"><rect width="48" height="48" fill="#8dcdf2"/><ellipse cx="6" cy="27" rx="9" ry="6" fill="#f1f3f4"/><ellipse cx="3" cy="15" rx="7" ry="4" fill="#dbeefa"/><path d="M30 18c10 2 16 12 16 22l-10 6-8-8z" fill="#d8c091"/><path d="M13 22c0-8 18-8 18 0v8H13z" fill="#d9c396"/><ellipse cx="22" cy="24.5" rx="8" ry="7" fill="#f6dfd8"/><ellipse cx="17.5" cy="22.6" rx="1.5" ry="2" fill="#2a2024"/><ellipse cx="26" cy="23" rx="1.5" ry="2" fill="#2a2024"/><ellipse cx="16" cy="26.5" rx="1.8" ry="1" fill="#f2b9b8"/><ellipse cx="27.5" cy="26.8" rx="1.8" ry="1" fill="#f2b9b8"/><path d="M12 15c0-10 20-12 22 0 2 2 2 4-1 4-8-2-14-2-21 0-2 0-2-3 0-4z" fill="#5d8fe2"/><path d="M14 11c2-9 16-9 18 0-6-2-12-2-18 0z" fill="#f2f2f6"/><path d="M15 32c4-2 12-2 16 0l1 11H16z" fill="#5b8de0"/><path d="M18 42h4.4v6H18zM24 42h4.4v6H24z" fill="#f4f4f4"/></g></g><circle cx="24" cy="24" r="23.7" fill="none" stroke="rgba(205,205,195,.6)" stroke-width=".8"/></svg>
<div class="b" style="left:834px;top:298.9px;width:64px;height:24.6px;background:rgba(8,10,12,.52);"></div>
<svg class="b" style="left:839.1px;top:304.5px" width="12" height="14" viewBox="0 0 12 14"><rect x="3.3" y="0.9" width="5.8" height="8" rx="2.9" fill="#f0f0f0"/><path d="M1.6 6.6a4.6 4.6 0 0 0 9.2 0M6.2 11.2v2" fill="none" stroke="#f0f0f0" stroke-width="1.4" stroke-linecap="round"/><path d="M11.2 1.2 0.9 12" stroke="#c9605f" stroke-width="1.5" stroke-linecap="round"/></svg>
<div class="t" aria-label="黄燕晖" style="top:303.48px;height:15.84px;line-height:15.84px;font-size:13.2px;color:#ececec;left:855.1px;"><span>黄燕晖</span></div>
<div class="b" style="left:834px;top:325.5px;width:190px;height:106.5px;background:linear-gradient(100deg,#413f36 0,#39382c 28%,#36352a 100%);overflow:hidden"></div>
<svg class="b" style="left:904.1px;top:354.1px" width="50" height="50" viewBox="-1 -1 50 50"><defs><clipPath id="cp3"><circle cx="24" cy="24" r="23.6"/></clipPath></defs><g clip-path="url(#cp3)"><g filter="url(#soft2)"><rect width="48" height="48" fill="#7d835d"/><rect width="48" height="9" fill="#c9cdd8"/><path d="M0 12c6-8 12-6 16-7 6-2 10 0 14 1l10 3 8 6v8H0z" fill="#5e694d"/><path d="M8 6v12M13 5v13M19 4v14M24 5v13M29 4v14M35 7v12" stroke="#4a5640" stroke-width="1.6"/><rect x="0" y="19" width="48" height="5" fill="#8a7f5c"/><path d="M0 25h27v5H0z" fill="#8b9dcb"/><path d="M28 24h20v8H28z" fill="#7f8a5c"/><path d="M30 31c4-4 8-2 12-4l6 2v8H31z" fill="#cbbb90"/><path d="M0 31h30l18 6v11H0z" fill="#b3b7b6"/><path d="M0 31h20v5H4z" fill="#8e947a"/></g></g><circle cx="24" cy="24" r="23.7" fill="none" stroke="rgba(205,205,195,.6)" stroke-width=".8"/></svg>
<div class="b" style="left:834px;top:407.4px;width:64px;height:24.6px;background:rgba(8,10,12,.52);"></div>
<svg class="b" style="left:839.1px;top:413.0px" width="12" height="14" viewBox="0 0 12 14"><rect x="3.3" y="0.9" width="5.8" height="8" rx="2.9" fill="#f0f0f0"/><path d="M1.6 6.6a4.6 4.6 0 0 0 9.2 0M6.2 11.2v2" fill="none" stroke="#f0f0f0" stroke-width="1.4" stroke-linecap="round"/><path d="M11.2 1.2 0.9 12" stroke="#c9605f" stroke-width="1.5" stroke-linecap="round"/></svg>
<div class="t" aria-label="徐延钦" style="top:411.98px;height:15.84px;line-height:15.84px;font-size:13.2px;color:#ececec;left:855.1px;"><span>徐延钦</span></div>
<div class="b" style="left:834px;top:434.0px;width:190px;height:106.5px;background:radial-gradient(ellipse 75% 95% at 0% 0%,#2b3d5c 0,rgba(43,61,92,.6) 45%,rgba(43,61,92,0) 100%),linear-gradient(180deg,#2a3443 0,#2c323d 60%,#2e3036 100%);overflow:hidden"></div>
<svg class="b" style="left:904.1px;top:462.6px" width="50" height="50" viewBox="-1 -1 50 50"><defs><clipPath id="cp4"><circle cx="24" cy="24" r="23.6"/></clipPath></defs><g clip-path="url(#cp4)"><g filter="url(#soft1)"><rect width="48" height="48" fill="#90b1e8"/><rect y="22" width="48" height="14" fill="#c7d8f1"/><path d="M23.2 2.5 24 2.5 24.6 8l1.6 3v7l3 2.4v1.6l3 1V44H15V23l3-1v-1.6l3-2.4V11l1.6-3z" fill="#b9b9b1"/><path d="M21 12h5v32h-5z" fill="#cfcdc2"/><path d="M8 32h7v14H8zM32 32h7v14h-7z" fill="#a9aaa3"/><path d="M0 36l4-6 3 5 3-8 4 8v13H0zM48 30l-4-6-3 7-3-5-4 8v14h14z" fill="#1d2a31"/><path d="M33 2c4 2 8 6 10 12l5 8V0H30z" fill="#22303a"/><path d="M14 44h20v4H14z" fill="#6d7476"/></g></g><circle cx="24" cy="24" r="23.7" fill="none" stroke="rgba(205,205,195,.6)" stroke-width=".8"/></svg>
<div class="b" style="left:834px;top:515.9px;width:64px;height:24.6px;background:rgba(8,10,12,.52);"></div>
<svg class="b" style="left:839.1px;top:521.5px" width="12" height="14" viewBox="0 0 12 14"><rect x="3.3" y="0.9" width="5.8" height="8" rx="2.9" fill="#f0f0f0"/><path d="M1.6 6.6a4.6 4.6 0 0 0 9.2 0M6.2 11.2v2" fill="none" stroke="#f0f0f0" stroke-width="1.4" stroke-linecap="round"/><path d="M11.2 1.2 0.9 12" stroke="#c9605f" stroke-width="1.5" stroke-linecap="round"/></svg>
<div class="t" aria-label="林福财" style="top:520.48px;height:15.84px;line-height:15.84px;font-size:13.2px;color:#ececec;left:855.1px;"><span>林福财</span></div>
<div class="b" style="left:834px;top:542.5px;width:190px;height:106.5px;background:linear-gradient(90deg,#3d3936 0,#3f3a37 60%,#37322f 100%);overflow:hidden"></div>
<svg class="b" style="left:904.1px;top:571.1px" width="50" height="50" viewBox="-1 -1 50 50"><defs><clipPath id="cp5"><circle cx="24" cy="24" r="23.6"/></clipPath></defs><g clip-path="url(#cp5)"><g filter="url(#soft1)"><rect width="48" height="48" fill="#8e9182"/><path d="M5 8l3 30M12 4l2 24M20 2l-2 22M28 3l1 22M35 6l-2 20M41 12l-1 22" stroke="#d9dbd0" stroke-width="1.6"/><path d="M8 10l2 26M16 4l0 20M24 3l1 18M32 5l0 18M38 10l1 20" stroke="#4e5244" stroke-width="1.8"/><path d="M26 28c6-4 14-2 18 4l-4 12-12 4-6-6z" fill="#3f5232"/><ellipse cx="18" cy="30" rx="9" ry="8" fill="#c98d9c"/><ellipse cx="24" cy="40" rx="5" ry="5" fill="#c07f90"/><ellipse cx="20" cy="25" rx="5" ry="4" fill="#dab0b8"/><ellipse cx="41" cy="28" rx="4" ry="3" fill="#b98a98"/><circle cx="17" cy="31" r=".9" fill="#4a5ac0"/><circle cx="20" cy="34" r=".8" fill="#4a5ac0"/><circle cx="19" cy="28.5" r=".7" fill="#5a6ad0"/></g></g><circle cx="24" cy="24" r="23.7" fill="none" stroke="rgba(205,205,195,.6)" stroke-width=".8"/></svg>
<div class="b" style="left:834px;top:624.4px;width:142.4px;height:24.6px;background:rgba(8,10,12,.52);"></div>
<svg class="b" style="left:839.8px;top:629.7px" width="13.7" height="14" viewBox="0 0 14 14"><rect x="0" y="0.4" width="14" height="9.6" rx="1.4" fill="#f1f1f1"/><rect x="3" y="12" width="8" height="1.7" rx=".6" fill="#f1f1f1"/><path d="M4.2 7.6c.4-2 1.8-3 3.8-3" fill="none" stroke="#222" stroke-width="1.3"/><path d="M7.4 2.6 10.2 4.6 7.4 6.6z" fill="#222"/></svg>
<svg class="b" style="left:863.5px;top:630.0px" width="12" height="14" viewBox="0 0 12 14"><rect x="3.3" y="0.9" width="5.8" height="8" rx="2.9" fill="#f0f0f0"/><path d="M1.6 6.6a4.6 4.6 0 0 0 9.2 0M6.2 11.2v2" fill="none" stroke="#f0f0f0" stroke-width="1.4" stroke-linecap="round"/><path d="M11.2 1.2 0.9 12" stroke="#c9605f" stroke-width="1.5" stroke-linecap="round"/></svg>
<div class="t" aria-label="牟磊的屏幕共享" style="top:628.98px;height:15.84px;line-height:15.84px;font-size:13.2px;color:#ececec;left:879.5px;"><span>牟磊的屏幕共享</span></div>
<div class="b" style="left:834px;top:651.0px;width:190px;height:106.5px;background:radial-gradient(ellipse 45% 60% at 100% 100%,rgba(50,54,58,.8),rgba(50,54,58,0) 100%),linear-gradient(180deg,#343533 0,#353731 35%,#3a4228 75%,#394126 100%);overflow:hidden"></div>
<svg class="b" style="left:904.1px;top:679.6px" width="50" height="50" viewBox="-1 -1 50 50"><defs><clipPath id="cp6"><circle cx="24" cy="24" r="23.6"/></clipPath></defs><g clip-path="url(#cp6)"><g filter="url(#soft)"><g filter="url(#soft2)"><rect width="48" height="48" fill="#7d8183"/><path d="M0 0h22v20H0z" fill="#6a6e70"/><path d="M10 4v22M21 0v16" stroke="#3a3d3e" stroke-width="1.6"/><path d="M22 0h26v16l-8 8H24z" fill="#8a8e92"/><path d="M26 6l8 12 8-6" stroke="#5a5e62" stroke-width="3" fill="none"/><path d="M45 12 38 24" stroke="#2e3030" stroke-width="2"/><path d="M0 24h48v10H0z" fill="#6f7a62"/><path d="M38 16l10 2v14H36z" fill="#b9bdb2"/><path d="M0 32h48v16H0z" fill="#5f6468"/><path d="M30 34l14 4-4 8H28z" fill="#4a5264"/></g><rect x="13.6" y="18" width="8.4" height="14.5" rx="4.2" fill="#d6e4cc"/><path d="M10 28.5a7.8 7.8 0 0 0 15.6 0M17.8 36.6v4M12.6 41h10.4" fill="none" stroke="#dfe6dc" stroke-width="1.7" stroke-linecap="round"/><path d="M27 19.4 8.2 40" stroke="#c4514f" stroke-width="1.9" stroke-linecap="round"/></g></g><circle cx="24" cy="24" r="24" fill="rgba(0,0,0,0.14)"/><circle cx="24" cy="24" r="23.7" fill="none" stroke="rgba(205,205,195,.6)" stroke-width=".8"/></svg>
<div class="b" style="left:834px;top:732.9px;width:50.6px;height:24.6px;background:rgba(8,10,12,.52);"></div>
<svg class="b" style="left:839.1px;top:738.5px" width="12" height="14" viewBox="0 0 12 14"><rect x="3.3" y="0.9" width="5.8" height="8" rx="2.9" fill="#f0f0f0"/><path d="M1.6 6.6a4.6 4.6 0 0 0 9.2 0M6.2 11.2v2" fill="none" stroke="#f0f0f0" stroke-width="1.4" stroke-linecap="round"/><path d="M11.2 1.2 0.9 12" stroke="#c9605f" stroke-width="1.5" stroke-linecap="round"/></svg>
<div class="t" aria-label="贺伟" style="top:737.48px;height:15.84px;line-height:15.84px;font-size:13.2px;color:#ececec;left:855.1px;"><span>贺伟</span></div>
<div class="b" style="left:834px;top:759.5px;width:190px;height:8.5px;background:linear-gradient(90deg,#67655b,#6a6460 55%,#6e5c5b);overflow:hidden"></div>
<div class="b" style="left:973px;top:633.5px;width:39px;height:41px;background:#2c2c2c;border-radius:4.5px"></div>
<svg class="b" style="left:981px;top:641px" width="24" height="26" viewBox="0 0 24 26"><path d="M12.4 4H19a2.4 2.4 0 0 1 2.4 2.4v13.2A2.4 2.4 0 0 1 19 22H5.8a2.4 2.4 0 0 1-2.4-2.4V13" fill="none" stroke="#f2f2f2" stroke-width="1.9"/><path d="M1.6 3.8 5 .8 16.6 12.6v3.6h-3.6z" fill="#f2f2f2"/></svg>
<div class="b" style="left:828.6px;top:356.5px;width:3px;height:54px;background:#9b9b9b;border-radius:1.5px"></div>
</body></html>
